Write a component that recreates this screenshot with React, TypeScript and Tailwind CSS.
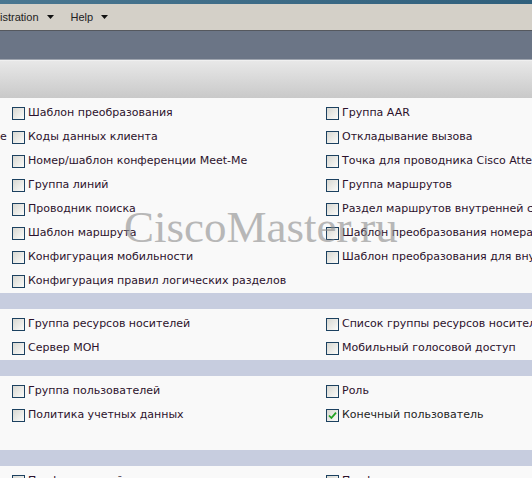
import React from 'react';

type Item = { label: string; checked?: boolean };
type Row = { lead?: string; left?: Item; right?: Item };

const sections: { rows: Row[]; pt: string; pb: string }[] = [
  {
    pt: 'pt-[3px]',
    pb: 'pb-0',
    rows: [
      { left: { label: 'Шаблон преобразования' }, right: { label: 'Группа AAR' } },
      { lead: 'е', left: { label: 'Коды данных клиента' }, right: { label: 'Откладывание вызова' } },
      { left: { label: 'Номер/шаблон конференции Meet-Me' }, right: { label: 'Точка для проводника Cisco Attendant Console' } },
      { left: { label: 'Группа линий' }, right: { label: 'Группа маршрутов' } },
      { left: { label: 'Проводник поиска' }, right: { label: 'Раздел маршрутов внутренней сети' } },
      { left: { label: 'Шаблон маршрута' }, right: { label: 'Шаблон преобразования номера вызывающего абонента' } },
      { left: { label: 'Конфигурация мобильности' }, right: { label: 'Шаблон преобразования для внутренней сети' } },
      { left: { label: 'Конфигурация правил логических разделов' } },
    ],
  },
  {
    pt: 'pt-[3px]',
    pb: 'pb-0',
    rows: [
      { left: { label: 'Группа ресурсов носителей' }, right: { label: 'Список группы ресурсов носителей' } },
      { left: { label: 'Сервер MOH' }, right: { label: 'Мобильный голосовой доступ' } },
    ],
  },
  {
    pt: 'pt-[3px]',
    pb: 'pb-[23px]',
    rows: [
      { left: { label: 'Группа пользователей' }, right: { label: 'Роль' } },
      { left: { label: 'Политика учетных данных' }, right: { label: 'Конечный пользователь', checked: true } },
    ],
  },
  {
    pt: 'pt-[3px]',
    pb: 'pb-0',
    rows: [{ left: { label: 'Профиль устройства' }, right: { label: 'Профиль' } }],
  },
];

function Box({ checked }: { checked?: boolean }) {
  return (
    <span className="relative flex h-[13px] w-[13px] shrink-0 items-center justify-center border border-[#1c4160] bg-gradient-to-br from-[#d8d8d2] to-[#fbfbf9]">
      {checked && (
        <svg width="9" height="9" viewBox="0 0 9 9">
          <path d="M1 4.5 L3.4 7 L8 1.6" fill="none" stroke="#21a121" strokeWidth="1.8" />
        </svg>
      )}
    </span>
  );
}

function Cell({ item }: { item?: Item }) {
  if (!item) return null;
  return (
    <div className="flex items-center gap-[3px] overflow-hidden whitespace-nowrap">
      <Box checked={item.checked} />
      <span className={item.checked ? 'text-[#1e1e1e]' : 'text-[#2c122c]'}>{item.label}</span>
    </div>
  );
}

function Caret() {
  return (
    <svg width="7" height="4" viewBox="0 0 7 4" className="ml-[8px]">
      <path d="M0 0 H7 L3.5 4 Z" fill="#111" />
    </svg>
  );
}

export default function App() {
  return (
    <div className="relative h-[478px] w-[532px] overflow-hidden bg-[#f9f9f9]">
      <div className="h-[4px] bg-gradient-to-r from-[#4a7791] to-[#2f5f7c]" />
      <div
        className="flex h-[26px] items-center bg-[#d4d0c8] text-[11px] text-[#222]"
        style={{ fontFamily: '"Liberation Sans", Arial, sans-serif' }}
      >
        <span className="flex items-center">
          istration
          <Caret />
        </span>
        <span className="ml-[17px] flex items-center">
          Help
          <Caret />
        </span>
      </div>
      <div className="h-[1px] bg-[#55585e]" />
      <div className="h-[28px] bg-[#6b7586]" />
      <div className="h-[1px] bg-[#9ea4ae]" />
      <div className="h-[1px] bg-[#f0f0f0]" />
      <div className="h-[37px] bg-gradient-to-b from-[#e8e8e8] to-[#c9c9c9]" />

      <div className="text-[11px]" style={{ fontFamily: '"DejaVu Sans", Verdana, sans-serif' }}>
        {sections.map((s, si) => (
          <div key={si}>
            <div className={`${s.pt} ${s.pb}`}>
              {s.rows.map((r, ri) => (
                <div key={ri} className="flex h-[24px] items-center">
                  <div className="w-[12px] overflow-hidden whitespace-nowrap text-[#2c122c]">{r.lead}</div>
                  <div className="w-[314px] overflow-hidden">
                    <Cell item={r.left} />
                  </div>
                  <div className="min-w-0 flex-1 overflow-hidden">
                    <Cell item={r.right} />
                  </div>
                </div>
              ))}
            </div>
            {si < sections.length - 1 && <div className="h-[16px] bg-[#c7cddf]" />}
          </div>
        ))}
      </div>

      <div
        className="pointer-events-none absolute left-[124px] top-[205px] text-[45px] leading-none text-[#8c8c8c] opacity-60"
        style={{ fontFamily: '"Liberation Serif", "Times New Roman", serif' }}
      >
        CiscoMaster.ru
      </div>
    </div>
  );
}
